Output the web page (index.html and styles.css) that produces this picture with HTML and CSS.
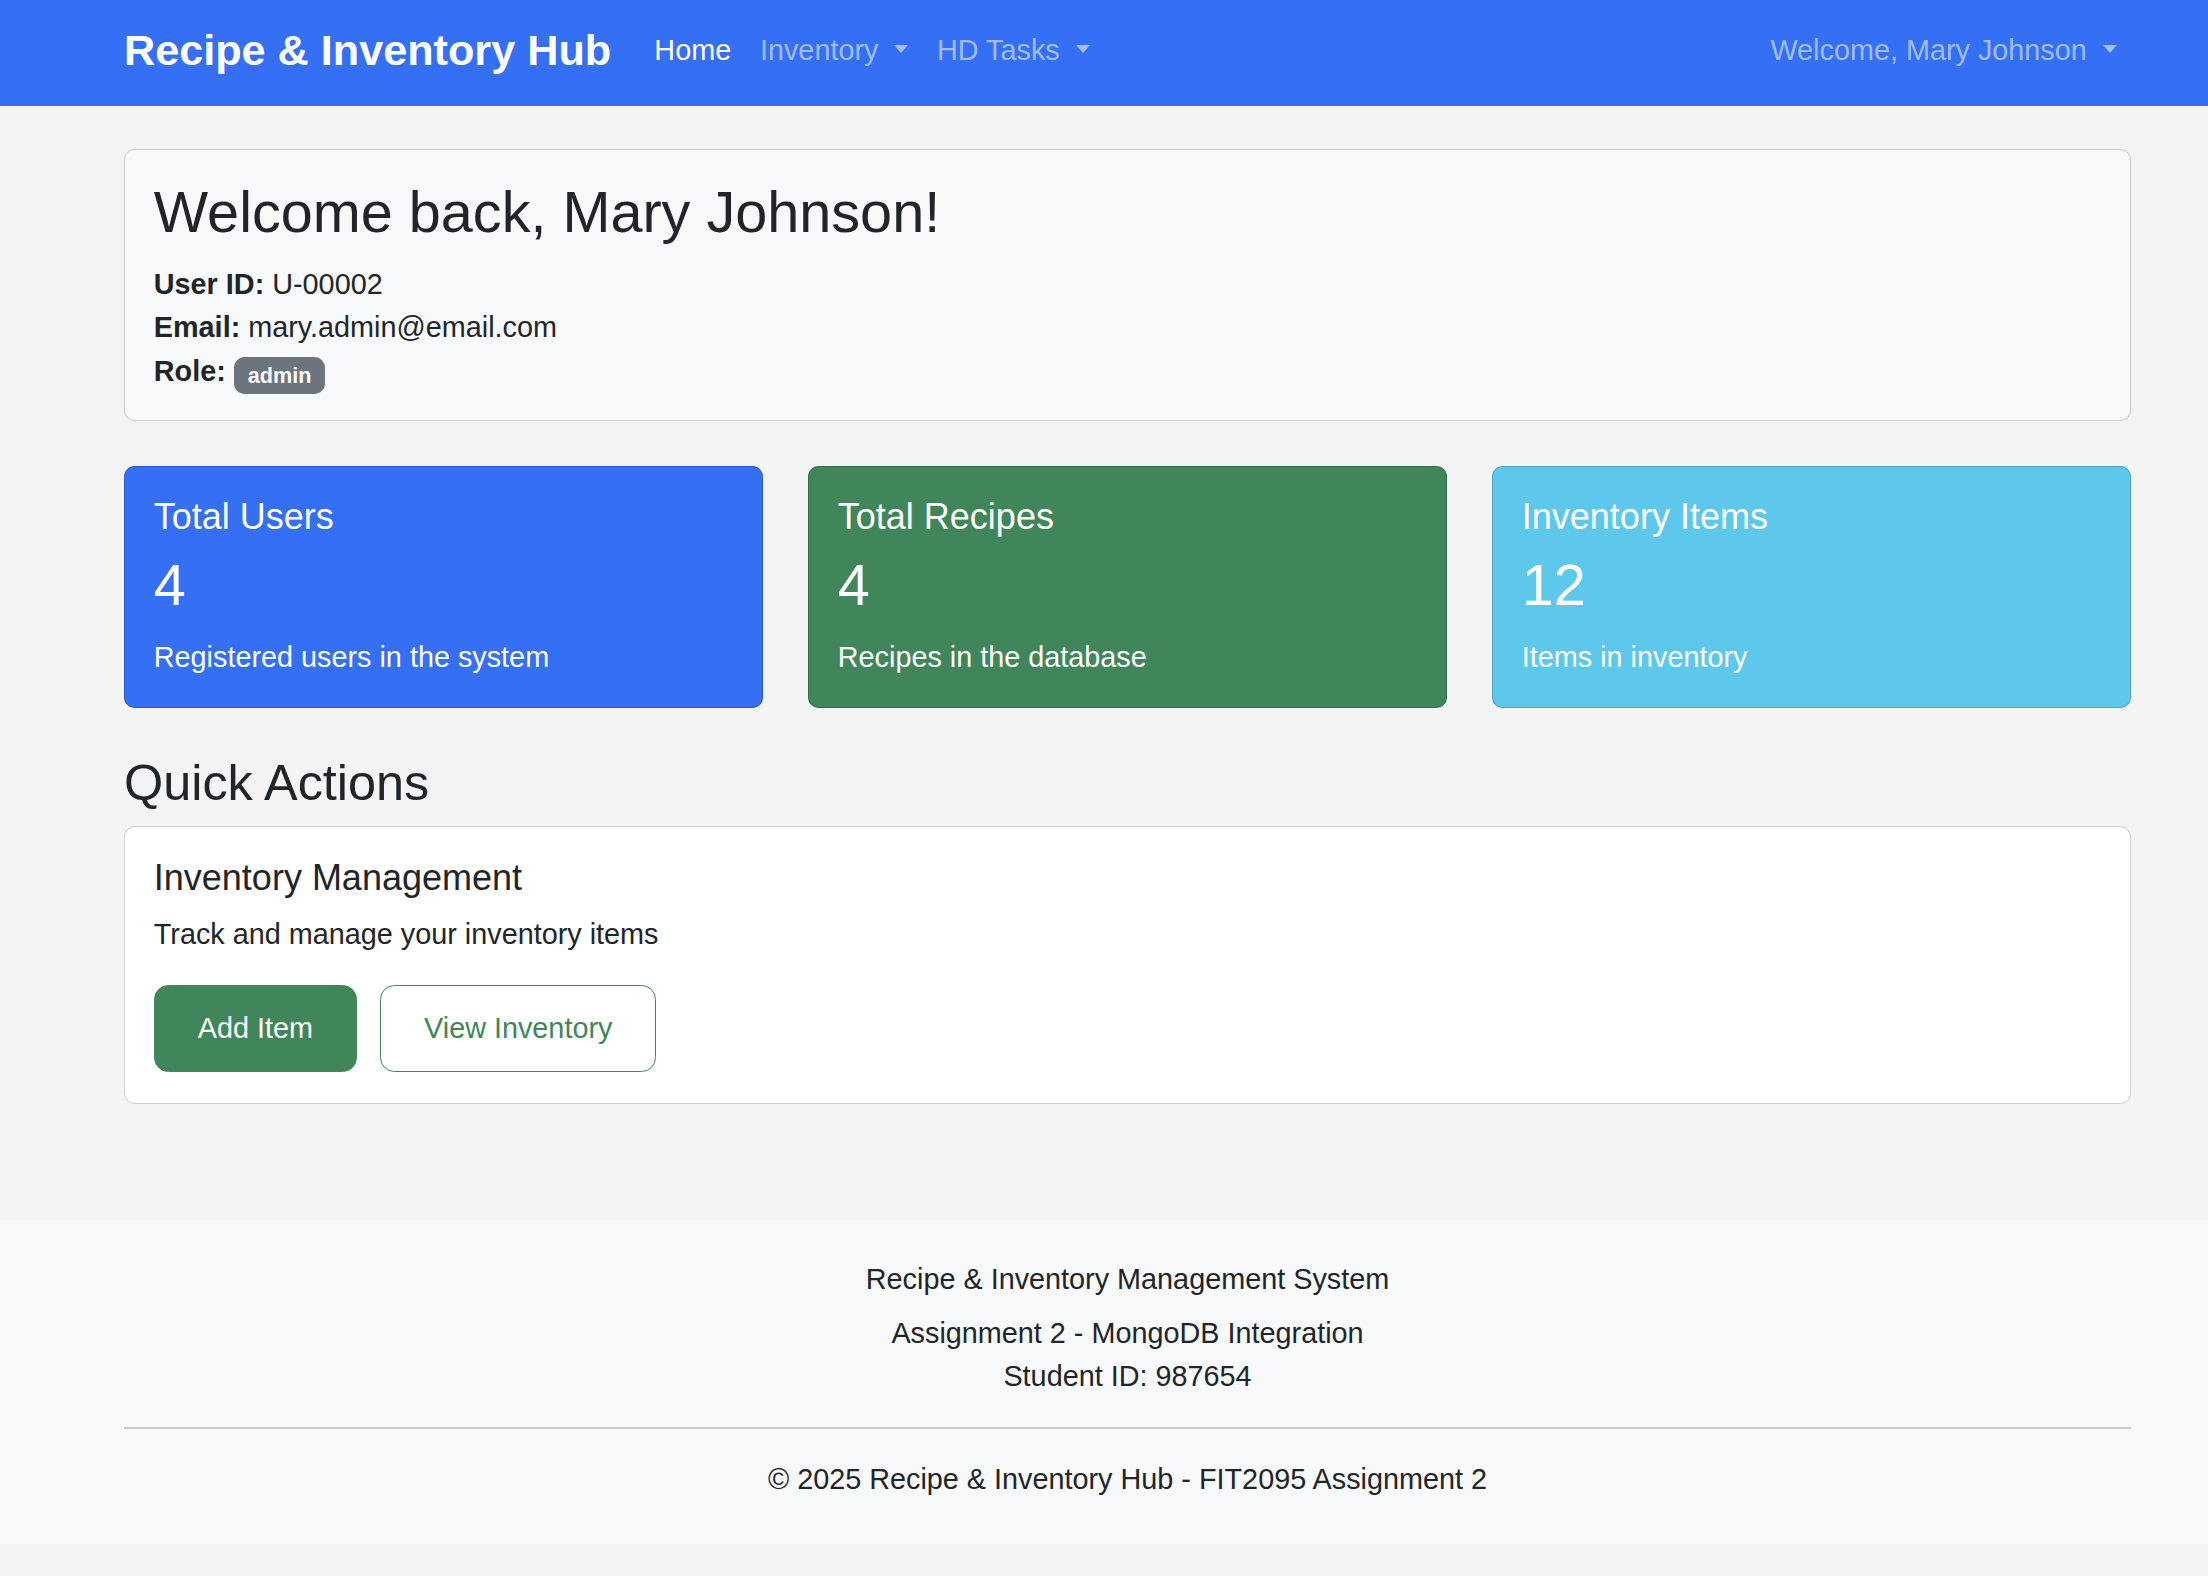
FILE: index.html
```html
<!DOCTYPE html>
<html lang="en">
<head>
<meta charset="utf-8">
<title>Recipe &amp; Inventory Hub</title>
<link rel="stylesheet" href="styles.css">
</head>
<body>
<nav class="navbar">
  <div class="container nav-inner">
    <a class="brand" href="#">Recipe &amp; Inventory Hub</a>
    <ul class="nav-list">
      <li><a class="nav-link active" href="#">Home</a></li>
      <li><a class="nav-link dropdown-toggle" href="#">Inventory</a></li>
      <li><a class="nav-link dropdown-toggle" href="#">HD Tasks</a></li>
    </ul>
    <ul class="nav-list nav-list-right">
      <li><a class="nav-link dropdown-toggle" href="#">Welcome, Mary Johnson</a></li>
    </ul>
  </div>
</nav>

<main class="container main">
  <section class="card card-light welcome-card">
    <h2 class="welcome-title">Welcome back, Mary Johnson!</h2>
    <p class="info-line"><strong>User ID:</strong> U-00002</p>
    <p class="info-line"><strong>Email:</strong> mary.admin@email.com</p>
    <p class="info-line"><strong>Role:</strong> <span class="badge">admin</span></p>
  </section>

  <div class="stats">
    <div class="card stat stat-blue">
      <h5 class="card-title">Total Users</h5>
      <h2 class="stat-number">4</h2>
      <p class="card-text">Registered users in the system</p>
    </div>
    <div class="card stat stat-green">
      <h5 class="card-title">Total Recipes</h5>
      <h2 class="stat-number">4</h2>
      <p class="card-text">Recipes in the database</p>
    </div>
    <div class="card stat stat-cyan">
      <h5 class="card-title">Inventory Items</h5>
      <h2 class="stat-number">12</h2>
      <p class="card-text">Items in inventory</p>
    </div>
  </div>

  <h3 class="section-title">Quick Actions</h3>
  <section class="card card-white action-card">
    <h5 class="card-title">Inventory Management</h5>
    <p class="action-text">Track and manage your inventory items</p>
    <div class="btn-row">
      <a class="btn btn-green" href="#">Add Item</a>
      <a class="btn btn-outline-green" href="#">View Inventory</a>
    </div>
  </section>
</main>

<footer class="footer">
  <div class="container footer-inner">
    <p class="footer-line first">Recipe &amp; Inventory Management System</p>
    <p class="footer-line">Assignment 2 - MongoDB Integration<br>Student ID: 987654</p>
    <hr class="footer-rule">
    <p class="footer-line">&copy; 2025 Recipe &amp; Inventory Hub - FIT2095 Assignment 2</p>
  </div>
</footer>
</body>
</html>
```
FILE: styles.css
```css
html, body {
  margin: 0;
  padding: 0;
  background: #f4f4f4;
}

body {
  font-family: "Liberation Sans", Arial, Helvetica, sans-serif;
  font-size: 28.8px;
  line-height: 1.5;
  color: #212529;
}

.container {
  width: 2007px;
  margin-left: 124px;
}

/* Navbar */
.navbar {
  background: #346ff4;
  height: 106px;
  box-sizing: border-box;
  padding-bottom: 5px;
  display: flex;
  align-items: center;
}

.nav-inner {
  display: flex;
  align-items: center;
}

.brand {
  font-size: 43.2px;
  font-weight: 700;
  line-height: 1.5;
  color: #fff;
  text-decoration: none;
  margin-right: 28.8px;
}

.nav-list {
  display: flex;
  list-style: none;
  margin: 0;
  padding: 0;
}

.nav-list-right {
  margin-left: auto;
}

.nav-link {
  display: block;
  padding: 0 14.4px;
  color: rgba(255, 255, 255, 0.55);
  text-decoration: none;
  line-height: 1.5;
}

.nav-link.active {
  color: #fff;
}

.dropdown-toggle::after {
  content: "";
  display: inline-block;
  margin-left: 0.55em;
  vertical-align: 0.255em;
  border-top: 0.28em solid;
  border-right: 0.27em solid transparent;
  border-left: 0.27em solid transparent;
  border-bottom: 0;
}

/* Main */
.main {
  padding-top: 43.3px;
}

.card {
  border: 1px solid rgba(0, 0, 0, 0.175);
  border-radius: 10.8px;
  box-sizing: border-box;
}

.card-light {
  background: #f8f9fa;
}

.card-white {
  background: #fff;
}

.welcome-card {
  padding: 28.8px 28.8px 26.3px;
}

.welcome-title {
  font-size: 57.6px;
  font-weight: 400;
  line-height: 67px;
  margin: 0 0 17px;
}

.info-line {
  margin: 0;
  line-height: 43.2px;
}

.badge {
  display: inline-block;
  font-size: 21.6px;
  font-weight: 700;
  line-height: 1;
  color: #fff;
  background: #6c757d;
  padding: 7.56px 14px;
  border-radius: 10.8px;
  vertical-align: -2px;
}

/* Stats */
.stats {
  display: grid;
  grid-template-columns: repeat(3, 1fr);
  column-gap: 45px;
  margin-top: 45px;
}

.stat {
  padding: 28px 28.8px;
  color: #fff;
}

.stat-blue {
  background: #346ff4;
}

.stat-green {
  background: #41865a;
}

.stat-cyan {
  background: #5ec8ec;
}

.card-title {
  font-size: 36px;
  font-weight: 400;
  line-height: 43px;
  margin: 0 0 14px;
}

.stat-number {
  font-size: 57.6px;
  font-weight: 400;
  line-height: 67px;
  margin: 0 0 17px;
}

.card-text {
  margin: 0;
  line-height: 43.2px;
}

/* Quick actions */
.section-title {
  font-size: 50.4px;
  font-weight: 400;
  line-height: 60.5px;
  margin: 44.4px 0 12.8px;
}

.action-card {
  padding: 28.8px 28.8px 31.6px;
}

.action-card .card-title {
  line-height: 43.2px;
  margin-bottom: 14.4px;
}

.action-text {
  margin: 0 0 28.8px;
  line-height: 43.2px;
}

.btn-row {
  display: flex;
  gap: 23px;
}

.btn {
  display: inline-block;
  font-size: 28.8px;
  line-height: 43.2px;
  padding: 20.7px 43px;
  border-radius: 14.4px;
  border: 1px solid #41865a;
  text-decoration: none;
}

.btn-green {
  background: #41865a;
  color: #fff;
}

.btn-outline-green {
  background: transparent;
  color: #41865a;
}

/* Footer */
.footer {
  background: #f8f9fa;
  margin-top: 116px;
  padding: 38px 0 43px;
}

.footer-inner {
  text-align: center;
}

.footer-line {
  margin: 0;
  line-height: 43.2px;
}

.footer-line.first {
  margin-bottom: 10px;
}

.footer-rule {
  margin: 29px 0;
  border: 0;
  border-top: 2px solid #c9cacb;
  height: 0;
}
```
